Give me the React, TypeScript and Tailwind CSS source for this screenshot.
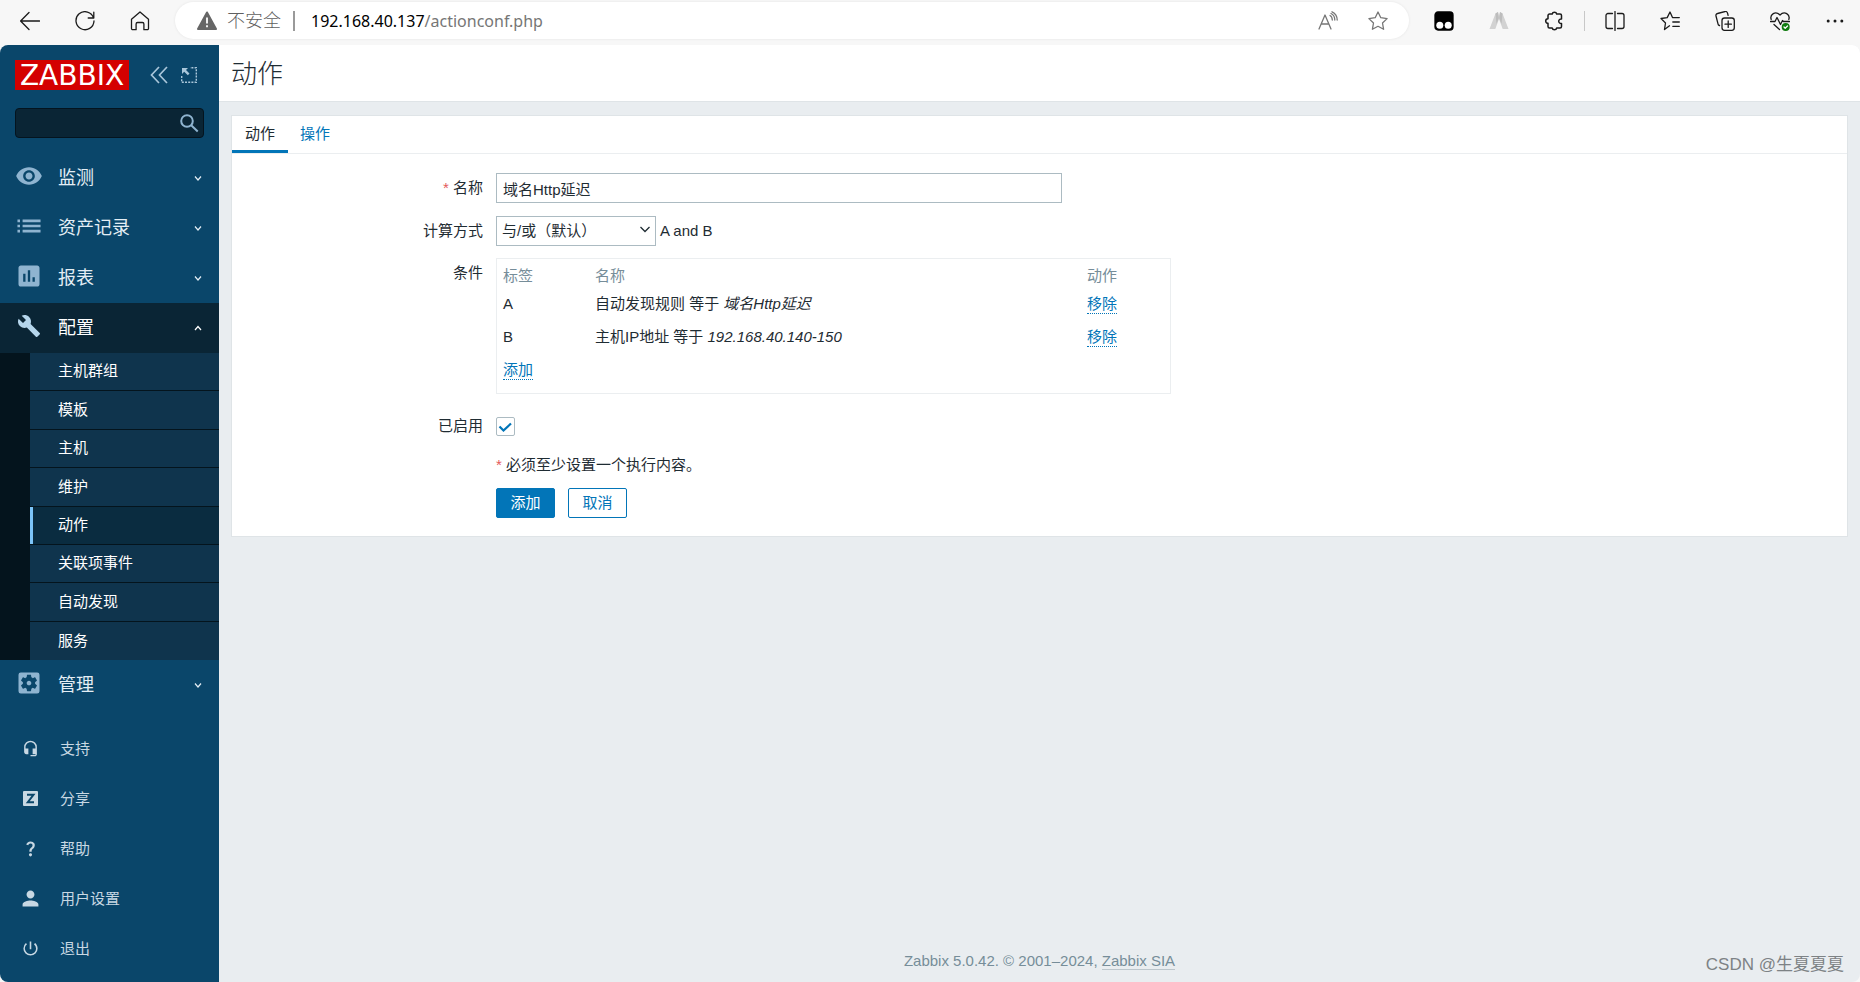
// App.tsx
import { useState } from 'react';
import type { ReactNode } from 'react';
import {
    MdRemoveRedEye,
    MdList,
    MdAssessment,
    MdBuild,
    MdSettingsApplications,
    MdPerson,
    MdPowerSettingsNew,
    MdHeadsetMic,
    MdQuestionMark,
} from 'react-icons/md';

interface Condition {
    label: string;
    name: string;
    value: string;
}

const conditions: Condition[] = [
    { label: 'A', name: '自动发现规则 等于', value: '域名Http延迟' },
    { label: 'B', name: '主机IP地址 等于', value: '192.168.40.140-150' },
];

const submenu = ['主机群组', '模板', '主机', '维护', '动作', '关联项事件', '自动发现', '服务'];

function ToolIcon({ children, className = 'text-[#1b1b1b]' }: { children: ReactNode; className?: string }) {
    return (
        <svg
            viewBox="0 0 20 20"
            className={`size-5 ${className}`}
            fill="none"
            stroke="currentColor"
            strokeWidth="1.3"
            strokeLinecap="round"
            strokeLinejoin="round"
        >
            {children}
        </svg>
    );
}

function ToolButton({ label, children, className }: { label: string; children: ReactNode; className?: string }) {
    return (
        <button type="button" aria-label={label} className="flex w-[50px] shrink-0 justify-center">
            <ToolIcon className={className}>{children}</ToolIcon>
        </button>
    );
}

function BrowserBar() {
    return (
        <header className="flex h-[45px] shrink-0 items-start bg-[#f7f7f7] pt-0.5">
            <div className="flex h-[37px] w-[175px] shrink-0 items-center gap-[5px] pl-[5px]">
                <ToolButton label="Back">
                    <path d="M19.5 10H.8M9 1.5.6 10 9 18.5" />
                </ToolButton>
                <ToolButton label="Refresh">
                    <path d="M18.6 7A9 9 0 1 0 19 10M18.8 1.2V7h-5.6" />
                </ToolButton>
                <ToolButton label="Home">
                    <path d="M1.5 8.3 10 1l8.5 7.3V17.5a1.2 1.2 0 0 1-1.2 1.2h-3.4V13a1.5 1.5 0 0 0-1.5-1.5H7.6A1.5 1.5 0 0 0 6.1 13v5.7H2.7a1.2 1.2 0 0 1-1.2-1.2z" />
                </ToolButton>
            </div>
            <div className="flex h-[37px] min-w-0 flex-1 items-center rounded-full bg-white pl-[22px] font-['Noto_Sans','Noto_Sans_CJK_SC',sans-serif] text-[16px] shadow-[0_0_3px_rgba(0,0,0,0.08)]">
                <svg viewBox="0 0 20 20" className="size-5 shrink-0">
                    <path d="M10 1.5 19 18H1z" fill="#666" stroke="#666" strokeWidth="2" strokeLinejoin="round" />
                    <path d="M10 6.5v6M10 14.3v2" stroke="#fff" strokeWidth="1.8" />
                </svg>
                <span className="ml-2.5 text-[18px] font-light text-[#5f5f5f]">不安全</span>
                <span className="mx-3 h-5 w-0.5 bg-[#9a9a9a]" />
                <p className="ml-1 flex-1 whitespace-nowrap text-[#767676]">
                    <span className="text-black">192.168.40.137</span>/actionconf.php
                </p>
                <div className="flex pr-1.5">
                    <ToolButton label="Read aloud" className="text-[#767676]">
                        <path d="M1 18 7 4l6 14M3.2 13H10.8M12 4.5c1.5.8 2.3 2.3 2.3 4.5M13 2.5c2.4 1.2 3.8 3.5 3.8 6.5M14 .8c3.2 1.500 5.200 4.400 5.200 8.200" />
                    </ToolButton>
                    <ToolButton label="Add to favourites" className="text-[#767676]">
                        <path d="m10 1 2.8 5.7 6.3.9-4.6 4.4 1.1 6.3L10 15.3l-5.6 3 1.1-6.3L.9 7.6l6.3-.9z" />
                    </ToolButton>
                </div>
            </div>
            <div className="flex h-[37px] shrink-0 items-center gap-[5px] pl-2.5">
                <ToolButton label="Tampermonkey">
                    <rect x="1" y="1" width="18" height="18" rx="3" fill="#000" stroke="#000" />
                    <circle cx="5.8" cy="14.3" r="3.5" fill="#fff" stroke="none" />
                    <circle cx="14.2" cy="14.3" r="3.5" fill="#fff" stroke="none" />
                </ToolButton>
                <ToolButton label="Extension">
                    <path d="M6.5 2.5 9 1l1 4 1-4 2.5 1.5L19.5 18h-5.8L10 8 6.3 18H.5z" fill="#d2d2d2" stroke="none" />
                    <path d="M6.5 2.5 9 1l.8 6-2.3 6zM13.5 2.5 11 1l-.8 6 2.3 6z" fill="#bdbdbd" stroke="none" />
                </ToolButton>
                <ToolButton label="Extensions">
                    <path
                        d="M5.5 3h2.7a2.3 2.3 0 0 1 4.5 0H16a1.5 1.5 0 0 1 1.5 1.5V8a2.3 2.3 0 1 0 0 4.5V15.5A1.5 1.5 0 0 1 16 17h-3.3a2.3 2.3 0 0 1-4.5 0H5.5A1.5 1.5 0 0 1 4 15.5v-3.2a2.3 2.3 0 0 1 0-4.6V4.5A1.5 1.5 0 0 1 5.5 3z"
                        strokeWidth="1.5"
                    />
                </ToolButton>
                <span className="h-5 w-px bg-[#c8c8c8]" />
                <ToolButton label="Split screen">
                    <path d="M7.5 2.5H3a2 2 0 0 0-2 2v11a2 2 0 0 0 2 2h4.5M12.5 2.5H17a2 2 0 0 1 2 2v11a2 2 0 0 1-2 2h-4.5M10 .5v19" />
                </ToolButton>
                <ToolButton label="Favourites">
                    <path d="M9.5 14.8 4.5 18.5l1-6.5L1 7.5l6.2-.9L10 1l2.5 5.6H19.3M12.8 11h6.5M12.8 15.3h6.5" />
                </ToolButton>
                <ToolButton label="Collections">
                    <rect x="7" y="7" width="12.3" height="12.3" rx="2.5" />
                    <path d="M13.2 10v6.4M10 13.2h6.4M4.5 14.5a2 2 0 0 1-1.5-1.7L1 5a2 2 0 0 1 1.5-2.5l7.5-2A2 2 0 0 1 12.5 2l.6 2.4" />
                </ToolButton>
                <ToolButton label="Performance">
                    <path d="M1.2 8.5C-.5 3.5 5.5-.5 10 4c4.5-4.5 10.5-.5 8.8 4.5M.5 10.5h4.5l2-4 3.5 7 2-4 1 1h6M4 13.5l5.5 5" />
                    <circle cx="15.7" cy="16" r="4" fill="#0f7b0f" stroke="none" />
                    <path d="m14 16 1.2 1.2L17.5 15" stroke="#fff" />
                </ToolButton>
                <ToolButton label="More">
                    <g fill="currentColor" stroke="none">
                        <circle cx="3.2" cy="10" r="1.5" />
                        <circle cx="10" cy="10" r="1.5" />
                        <circle cx="16.8" cy="10" r="1.5" />
                    </g>
                </ToolButton>
            </div>
        </header>
    );
}

function MenuItem({ icon, label, open = false }: { icon: ReactNode; label: string; open?: boolean }) {
    return (
        <a
            href="#"
            className={`flex h-[50px] items-center pl-[15px] pr-4 text-[18px] ${open ? 'bg-[#0a2535] text-white' : 'text-[#e4eef5]'}`}
        >
            <span className={`w-[43px] pb-1 text-[28px] ${open ? 'text-[#b5d6ec]' : 'text-[#8fb4d0]'}`}>{icon}</span>
            <span className="flex-1">{label}</span>
            <svg viewBox="0 0 10 10" className="size-2.5" fill="none" stroke="currentColor" strokeWidth="1.2">
                <path d={open ? 'm2 7 3-3.500L8 7' : 'm2 3.500 3 3.500 3-3.500'} />
            </svg>
        </a>
    );
}

function FooterItem({ icon, label }: { icon: ReactNode; label: string }) {
    return (
        <li>
            <a href="#" className="flex h-[50px] items-center pl-[21px] text-[15px] text-[#c8d8e3]">
                <span className="w-[39px] pb-0.5 text-[19px]">{icon}</span>
                {label}
            </a>
        </li>
    );
}

function Sidebar() {
    return (
        <aside className="flex w-[219px] shrink-0 flex-col rounded-bl-lg rounded-tl-lg bg-[#0a466a]">
            <div className="flex items-center pl-[15px] pt-[15px]">
                <a
                    href="#"
                    className="flex h-[30px] w-[114px] items-center justify-center bg-[#d40000] pt-0.5 font-['DejaVu_Sans',sans-serif] text-[28px] text-white"
                >
                    ZABBIX
                </a>
                <button type="button" aria-label="收起侧边栏" className="ml-5">
                    <svg viewBox="0 0 20 20" className="size-5" fill="none" stroke="#a9c6da" strokeWidth="1.7">
                        <path d="m10 2-7.500 8 7.500 8M18 2l-7.500 8 7.500 8" />
                    </svg>
                </button>
                <button type="button" aria-label="隐藏侧边栏" className="ml-3">
                    <svg viewBox="0 0 16 16" className="size-4" fill="none" stroke="#a9c6da">
                        <path d="M.7 9v6.300h14.600V.7H9" strokeWidth="1.4" strokeDasharray="2 1.2" />
                        <path d="M1 1h6L5 3l3.500 3.500-1.700 1.700L3.200 4.700 1 7z" fill="#a9c6da" stroke="none" />
                    </svg>
                </button>
            </div>
            <form role="search" className="mx-[15px] mt-[18px] flex h-[30px] items-center rounded border border-[#04141f] bg-[#0a2535] pr-1">
                <input type="text" aria-label="搜索" className="min-w-0 flex-1 bg-transparent px-2 text-[15px] text-white outline-none" />
                <button type="button" aria-label="搜索">
                    <svg viewBox="0 0 20 20" className="size-5" fill="none" stroke="#8fb4d0" strokeWidth="2">
                        <circle cx="8" cy="8" r="5.8" />
                        <path d="m12.200 12.200 6.500 6.300" />
                    </svg>
                </button>
            </form>
            <nav className="mt-[15px]">
                <MenuItem icon={<MdRemoveRedEye />} label="监测" />
                <MenuItem icon={<MdList className="scale-110" />} label="资产记录" />
                <MenuItem icon={<MdAssessment />} label="报表" />
                <MenuItem icon={<MdBuild className="p-0.5" />} label="配置" open />
                <ul className="grid h-[307px] auto-rows-fr bg-[#04141d] pl-[30px] text-[15px] text-white">
                    {submenu.map((item) => (
                        <li key={item} className="border-b border-[#04141d] last:border-b-0">
                            <a
                                href="#"
                                className={`flex h-full items-center border-l-3 pl-[25px] ${
                                    item === '动作' ? 'border-[#7cc4f8] bg-[#0a2c40]' : 'border-[#0f344d] bg-[#0f344d]'
                                }`}
                            >
                                {item}
                            </a>
                        </li>
                    ))}
                </ul>
                <MenuItem icon={<MdSettingsApplications />} label="管理" />
            </nav>
            <ul className="mt-3.5 pb-2">
                <FooterItem icon={<MdHeadsetMic className="p-px" />} label="支持" />
                <FooterItem
                    icon={
                        <svg viewBox="0 0 19 19" className="size-[19px]">
                            <rect x="2" y="2" width="15" height="15" rx="1" fill="#c8d8e3" />
                            <path d="M6 5.800h6.500L6.800 13.200H13" fill="none" stroke="#0a466a" strokeWidth="2" />
                        </svg>
                    }
                    label="分享"
                />
                <FooterItem icon={<MdQuestionMark />} label="帮助" />
                <FooterItem icon={<MdPerson className="scale-125" />} label="用户设置" />
                <FooterItem icon={<MdPowerSettingsNew />} label="退出" />
            </ul>
        </aside>
    );
}

function DottedButton({ children }: { children: ReactNode }) {
    return (
        <button type="button" className="border-b border-dotted border-[#0275b8] leading-[18px] text-[#0275b8]">
            {children}
        </button>
    );
}

const labelClass = 'mr-[13px] w-[251px] shrink-0 text-right leading-[30px]';

export default function App() {
    const [name, setName] = useState('域名Http延迟');
    const [enabled, setEnabled] = useState(true);

    return (
        <div className="flex min-h-screen flex-col bg-[#f7f7f7] font-['Liberation_Sans','Noto_Sans_CJK_SC',sans-serif] text-[15px] text-[#1f2c33]">
            <BrowserBar />
            <div className="flex flex-1">
                <Sidebar />
                <div className="flex min-w-0 flex-1 flex-col rounded-br-lg rounded-tr-lg bg-[#e9edf0]">
                    <div className="flex h-[57px] items-center rounded-tr-lg border-b border-[#dfe4e7] bg-white pl-3 pt-0.5">
                        <h1 className="text-[26px] font-light leading-8">动作</h1>
                    </div>

                    <main className="mx-3 mt-[13px] border border-[#dfe4e7] bg-white">
                        <div role="tablist" className="flex h-[38px] border-b border-[#ebeef0]">
                            <button type="button" role="tab" aria-selected="true" className="border-b-3 border-[#0275b8] px-[13px] pt-[3px]">
                                动作
                            </button>
                            <button type="button" role="tab" aria-selected="false" className="px-3 text-[#0275b8]">
                                操作
                            </button>
                        </div>

                        <form className="pb-[18px] pr-3 pt-[19px]">
                            <div className="flex">
                                <label htmlFor="name" className={labelClass}>
                                    <span className="text-[#e45959]">*</span> 名称
                                </label>
                                <input
                                    id="name"
                                    type="text"
                                    value={name}
                                    onChange={(e) => setName(e.target.value)}
                                    className="h-[30px] w-[566px] border border-[#acbbc2] px-1.5"
                                />
                            </div>

                            <div className="mt-[13px] flex">
                                <label htmlFor="evaltype" className={labelClass}>计算方式</label>
                                <div className="relative">
                                    <select
                                        id="evaltype"
                                        className="h-[30px] w-[160px] appearance-none border border-[#acbbc2] bg-white px-[5px]"
                                    >
                                        <option>与/或（默认）</option>
                                    </select>
                                    <svg
                                        viewBox="0 0 10 10"
                                        className="pointer-events-none absolute right-1.5 top-2 size-2.5"
                                        fill="none"
                                        stroke="#1f2c33"
                                        strokeWidth="1.3"
                                    >
                                        <path d="m.5 3 4.500 4.500L9.500 3" />
                                    </svg>
                                </div>
                                <span className="ml-1 leading-[30px]">A and B</span>
                            </div>

                            <div className="mt-3 flex">
                                <span id="conditions" className={labelClass}>条件</span>
                                <div className="w-[675px] border border-[#ebeef0] pb-1.5 pl-1.5 pt-[5px]">
                                    <table aria-labelledby="conditions" className="w-full table-fixed text-left">
                                        <thead className="text-[#768d99]">
                                            <tr className="h-6">
                                                <th className="w-[92px] font-normal">标签</th>
                                                <th className="font-normal">名称</th>
                                                <th className="w-[83px] font-normal">动作</th>
                                            </tr>
                                        </thead>
                                        <tbody>
                                            {conditions.map((c) => (
                                                <tr key={c.label} className="h-[33px]">
                                                    <td>{c.label}</td>
                                                    <td>
                                                        {c.name} <em>{c.value}</em>
                                                    </td>
                                                    <td>
                                                        <DottedButton>移除</DottedButton>
                                                    </td>
                                                </tr>
                                            ))}
                                            <tr className="h-[33px]">
                                                <td colSpan={3}>
                                                    <DottedButton>添加</DottedButton>
                                                </td>
                                            </tr>
                                        </tbody>
                                    </table>
                                </div>
                            </div>

                            <div className="mt-[17px] flex items-center">
                                <label htmlFor="status" className={labelClass}>已启用</label>
                                <span className="relative flex">
                                    <input
                                        id="status"
                                        type="checkbox"
                                        checked={enabled}
                                        onChange={(e) => setEnabled(e.target.checked)}
                                        className="size-[19px] appearance-none rounded-xs border border-[#acbbc2] bg-white"
                                    />
                                    {enabled && (
                                        <svg
                                            viewBox="0 0 19 19"
                                            className="pointer-events-none absolute inset-0 size-[19px]"
                                            fill="none"
                                            stroke="#0275b8"
                                            strokeWidth="2.2"
                                        >
                                            <path d="m3.500 9.500 4 4L15 6.500" />
                                        </svg>
                                    )}
                                </span>
                            </div>

                            <div className="pl-[264px]">
                                <p className="mt-[9px] leading-[30px]">
                                    <span className="text-[#e45959]">*</span> 必须至少设置一个执行内容。
                                </p>
                                <div className="mt-2 flex gap-[13px]">
                                    <button type="button" className="h-[30px] w-[59px] rounded-xs border border-[#0275b8] bg-[#0275b8] text-white">
                                        添加
                                    </button>
                                    <button type="button" className="h-[30px] w-[59px] rounded-xs border border-[#0275b8] bg-white text-[#0275b8]">
                                        取消
                                    </button>
                                </div>
                            </div>
                        </form>
                    </main>

                    <footer className="relative mt-auto pb-3 text-center leading-[18px] text-[#768d99]">
                        Zabbix 5.0.42. © 2001–2024,{' '}
                        <a href="#" className="border-b border-[#bcc6cc]">
                            Zabbix SIA
                        </a>
                        <span className="absolute bottom-2 right-4 text-[17px] text-[#7d8285]">CSDN @生夏夏夏</span>
                    </footer>
                </div>
            </div>
        </div>
    );
}
